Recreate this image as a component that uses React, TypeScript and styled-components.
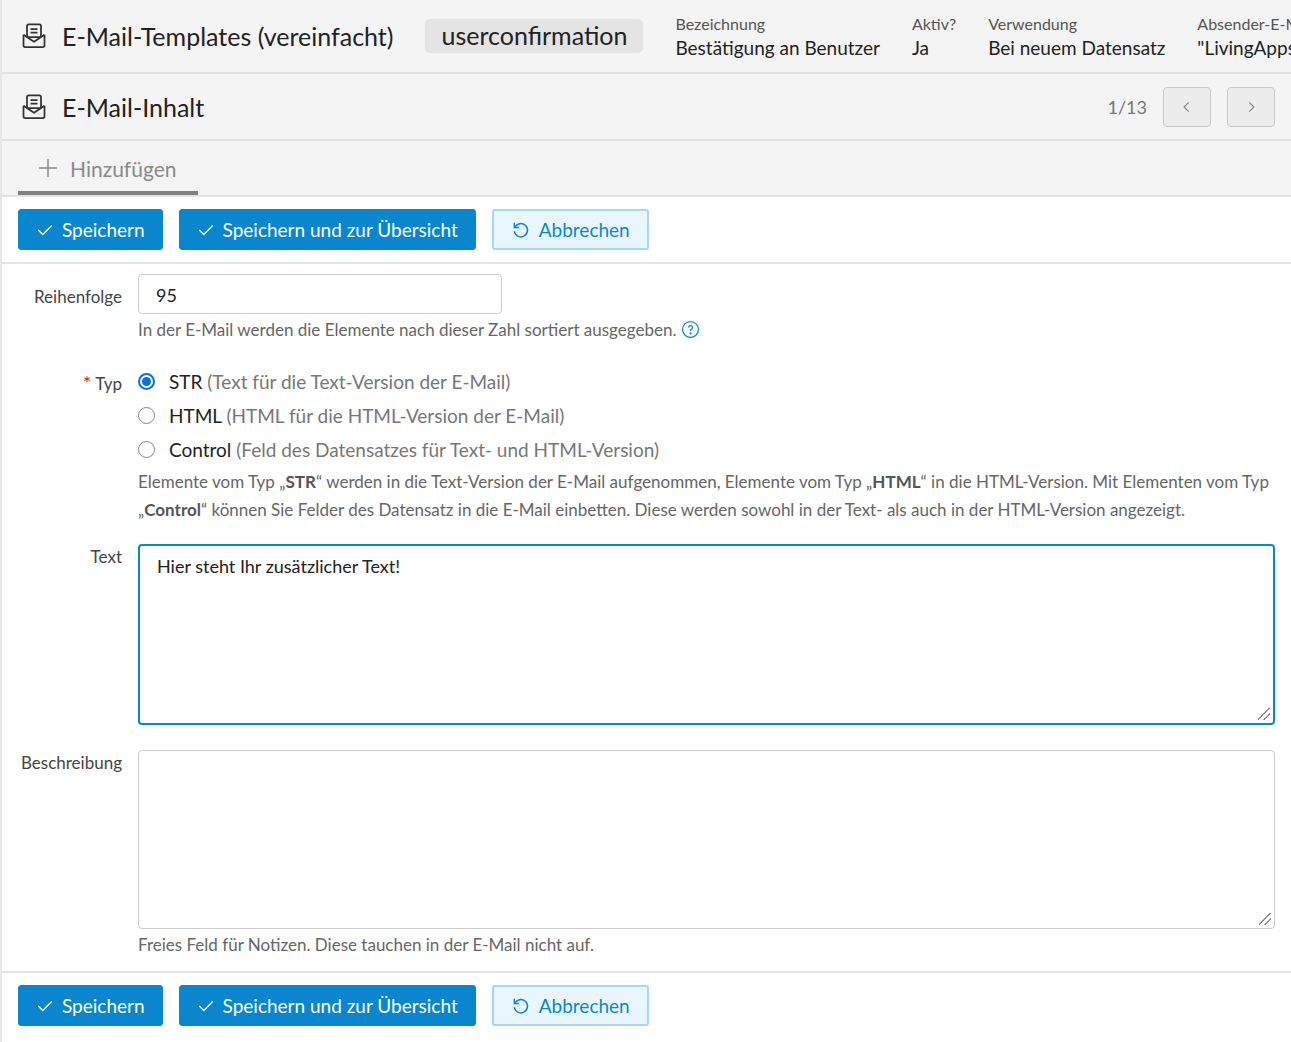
import React from 'react';
import styled, { createGlobalStyle } from 'styled-components';

const Global = createGlobalStyle`
  body { margin: 0; font-family: Lato, "Noto Sans", sans-serif; color: #222; background: #fff; }
`;

const MailIcon = () => (
  <svg width="28" height="28" viewBox="0 0 24 24" fill="none" stroke="#333" strokeWidth="1.5" strokeLinejoin="round">
    <rect x="6" y="2" width="12" height="11" rx="1.5" />
    <path d="M9 6h6M9 9h6" />
    <path d="M3 11v9a1.5 1.5 0 0 0 1.5 1.5h15A1.5 1.5 0 0 0 21 20v-9" />
    <path d="M3 11l9 6 9-6" />
  </svg>
);

const Check = ({ c = '#fff' }: { c?: string }) => (
  <svg width="18" height="18" viewBox="0 0 24 24" fill="none" stroke={c} strokeWidth="1.8"><path d="M3 12l6 6L21 6" /></svg>
);

const Undo = () => (
  <svg width="20" height="20" viewBox="0 0 24 24" fill="none" stroke="#0a86cf" strokeWidth="1.8" strokeLinecap="round">
    <path d="M4.5 9A8 8 0 1 1 4 14" />
    <path d="M4 4v5h5" />
  </svg>
);

const Page = styled.div`
  border-left: 2px solid #e6e6e6;
  min-height: 1042px;
`;
const Bar = styled.div<{ h: number }>`
  height: ${(p) => p.h}px;
  background: #f4f4f4;
  border-bottom: 2px solid #e2e2e2;
  display: flex;
  align-items: center;
  padding: 0 16px 0 18px;
  box-sizing: border-box;
  overflow: hidden;
`;
const Title = styled.div`
  display: flex;
  align-items: center;
  gap: 14px;
  font-size: 25px;
  color: #222;
  white-space: nowrap;
`;
const Chip = styled.span`
  margin-left: 32px;
  background: #e4e4e4;
  border-radius: 5px;
  padding: 1px 16px 3px;
  font-size: 25px;
  white-space: nowrap;
`;
const Meta = styled.div`
  display: flex;
  flex-direction: column;
  margin-left: 32px;
  white-space: nowrap;
  span:first-child { font-size: 16px; color: #555; }
  span:last-child { font-size: 19px; color: #222; margin-top: 3px; }
`;
const Pager = styled.div`
  margin-left: auto;
  display: flex;
  align-items: center;
  gap: 16px;
  color: #777;
  font-size: 18px;
`;
const NavBtn = styled.button`
  width: 48px;
  height: 40px;
  border: 1px solid #c8c8c8;
  border-radius: 4px;
  background: #ececec;
  display: flex;
  align-items: center;
  justify-content: center;
`;
const TabBar = styled.div`
  height: 54px;
  background: #f4f4f4;
  border-bottom: 2px solid #e2e2e2;
  padding-left: 16px;
  display: flex;
  align-items: flex-end;
`;
const Tab = styled.div`
  width: 180px;
  height: 100%;
  box-sizing: border-box;
  border-bottom: 4px solid #808080;
  display: flex;
  align-items: center;
  gap: 12px;
  padding: 4px 0 0 20px;
  font-size: 21px;
  color: #8a8a8a;
`;
const Actions = styled.div<{ top?: boolean }>`
  display: flex;
  gap: 16px;
  padding: 12px 16px;
  border-bottom: ${(p) => (p.top ? '2px solid #e4e4e4' : 'none')};
  border-top: ${(p) => (p.top ? 'none' : '2px solid #e4e4e4')};
`;
const Btn = styled.button<{ ghost?: boolean }>`
  height: 41px;
  display: flex;
  align-items: center;
  gap: 8px;
  padding: 0 17px;
  border-radius: 3px;
  font-family: inherit;
  font-size: 19px;
  background: ${(p) => (p.ghost ? '#eaf6fd' : '#0a86cf')};
  color: ${(p) => (p.ghost ? '#0a86cf' : '#fff')};
  border: ${(p) => (p.ghost ? '2px solid #a9d6f0' : '1px solid #0a86cf')};
`;
const Form = styled.div`
  padding: 10px 16px 12px 0;
  display: grid;
  grid-template-columns: 136px 1fr;
`;
const Label = styled.div<{ mt?: number }>`
  text-align: right;
  padding-right: 16px;
  font-size: 17px;
  color: #444;
  padding-top: ${(p) => p.mt ?? 0}px;
`;
const Field = styled.div<{ mb?: number }>`
  margin-bottom: ${(p) => p.mb ?? 0}px;
`;
const Input = styled.div`
  width: 364px;
  height: 40px;
  box-sizing: border-box;
  border: 1px solid #ccc;
  border-radius: 4px;
  padding: 9px 17px;
  font-size: 18px;
`;
const Hint = styled.div`
  color: #666;
  font-size: 17px;
  line-height: 28px;
  margin-top: 2px;
  b { color: #555; }
`;
const Radio = styled.div`
  display: flex;
  align-items: center;
  gap: 14px;
  height: 34px;
  font-size: 19px;
  span span { color: #777; }
`;
const Dot = styled.i<{ on?: boolean }>`
  width: 17px;
  height: 17px;
  border-radius: 50%;
  box-sizing: border-box;
  border: ${(p) => (p.on ? '2px solid #0a6ee0' : '1.5px solid #888')};
  display: flex;
  align-items: center;
  justify-content: center;
  &::after {
    content: '';
    width: 9px;
    height: 9px;
    border-radius: 50%;
    background: ${(p) => (p.on ? '#0a6ee0' : 'transparent')};
  }
`;
const Area = styled.div<{ focus?: boolean; h: number }>`
  height: ${(p) => p.h}px;
  box-sizing: border-box;
  border: ${(p) => (p.focus ? '2px solid #0a86cf' : '1px solid #ccc')};
  border-radius: 4px;
  padding: 9px 17px;
  font-size: 18px;
  position: relative;
  &::after {
    content: '';
    position: absolute;
    right: 3px;
    bottom: 3px;
    width: 12px;
    height: 12px;
    background: linear-gradient(135deg, transparent 45%, #888 46%, #888 52%, transparent 53%, transparent 70%, #888 71%, #888 77%, transparent 78%);
  }
`;

export default function App() {
  return (
    <Page>
      <Global />
      <Bar h={74}>
        <Title><MailIcon />E-Mail-Templates (vereinfacht)</Title>
        <Chip>userconfirmation</Chip>
        <Meta><span>Bezeichnung</span><span>Bestätigung an Benutzer</span></Meta>
        <Meta><span>Aktiv?</span><span>Ja</span></Meta>
        <Meta><span>Verwendung</span><span>Bei neuem Datensatz</span></Meta>
        <Meta><span>Absender-E-Mail</span><span>"LivingApps"</span></Meta>
      </Bar>
      <Bar h={67}>
        <Title><MailIcon />E-Mail-Inhalt</Title>
        <Pager>
          1/13
          <NavBtn><svg width="14" height="14" viewBox="0 0 24 24" fill="none" stroke="#888" strokeWidth="2"><path d="M15 4l-8 8 8 8" /></svg></NavBtn>
          <NavBtn><svg width="14" height="14" viewBox="0 0 24 24" fill="none" stroke="#888" strokeWidth="2"><path d="M9 4l8 8-8 8" /></svg></NavBtn>
        </Pager>
      </Bar>
      <TabBar>
        <Tab>
          <svg width="20" height="20" viewBox="0 0 20 20" stroke="#888" strokeWidth="1.5"><path d="M10 1v18M1 10h18" /></svg>
          Hinzufügen
        </Tab>
      </TabBar>
      <Actions top>
        <Btn><Check />Speichern</Btn>
        <Btn><Check />Speichern und zur Übersicht</Btn>
        <Btn ghost><Undo />Abbrechen</Btn>
      </Actions>
      <Form>
        <Label mt={12}>Reihenfolge</Label>
        <Field mb={20}>
          <Input>95</Input>
          <Hint>
            In der E-Mail werden die Elemente nach dieser Zahl sortiert ausgegeben.{' '}
            <svg width="19" height="19" viewBox="0 0 24 24" fill="none" stroke="#0a86cf" strokeWidth="1.6" style={{ verticalAlign: -3 }}>
              <circle cx="12" cy="12" r="10" /><path d="M9.5 9.5a2.5 2.5 0 1 1 3.5 2.3c-.7.3-1 .8-1 1.5v.7" /><circle cx="12" cy="17" r=".6" fill="#0a86cf" />
            </svg>
          </Hint>
        </Field>
        <Label mt={6}><span style={{ color: '#d22', fontSize: 20 }}>*</span> Typ</Label>
        <Field mb={20}>
          <Radio><Dot on /><span>STR <span>(Text für die Text-Version der E-Mail)</span></span></Radio>
          <Radio><Dot /><span>HTML <span>(HTML für die HTML-Version der E-Mail)</span></span></Radio>
          <Radio><Dot /><span>Control <span>(Feld des Datensatzes für Text- und HTML-Version)</span></span></Radio>
          <Hint>
            Elemente vom Typ „<b>STR</b>“ werden in die Text-Version der E-Mail aufgenommen, Elemente vom Typ „<b>HTML</b>“ in die HTML-Version. Mit Elementen vom Typ „<b>Control</b>“ können Sie Felder des Datensatz in die E-Mail einbetten. Diese werden sowohl in der Text- als auch in der HTML-Version angezeigt.
          </Hint>
        </Field>
        <Label mt={2}>Text</Label>
        <Field mb={25}>
          <Area focus h={181}>Hier steht Ihr zusätzlicher Text!</Area>
        </Field>
        <Label mt={2}>Beschreibung</Label>
        <Field>
          <Area h={179} />
          <Hint>Freies Feld für Notizen. Diese tauchen in der E-Mail nicht auf.</Hint>
        </Field>
      </Form>
      <Actions>
        <Btn><Check />Speichern</Btn>
        <Btn><Check />Speichern und zur Übersicht</Btn>
        <Btn ghost><Undo />Abbrechen</Btn>
      </Actions>
    </Page>
  );
}
